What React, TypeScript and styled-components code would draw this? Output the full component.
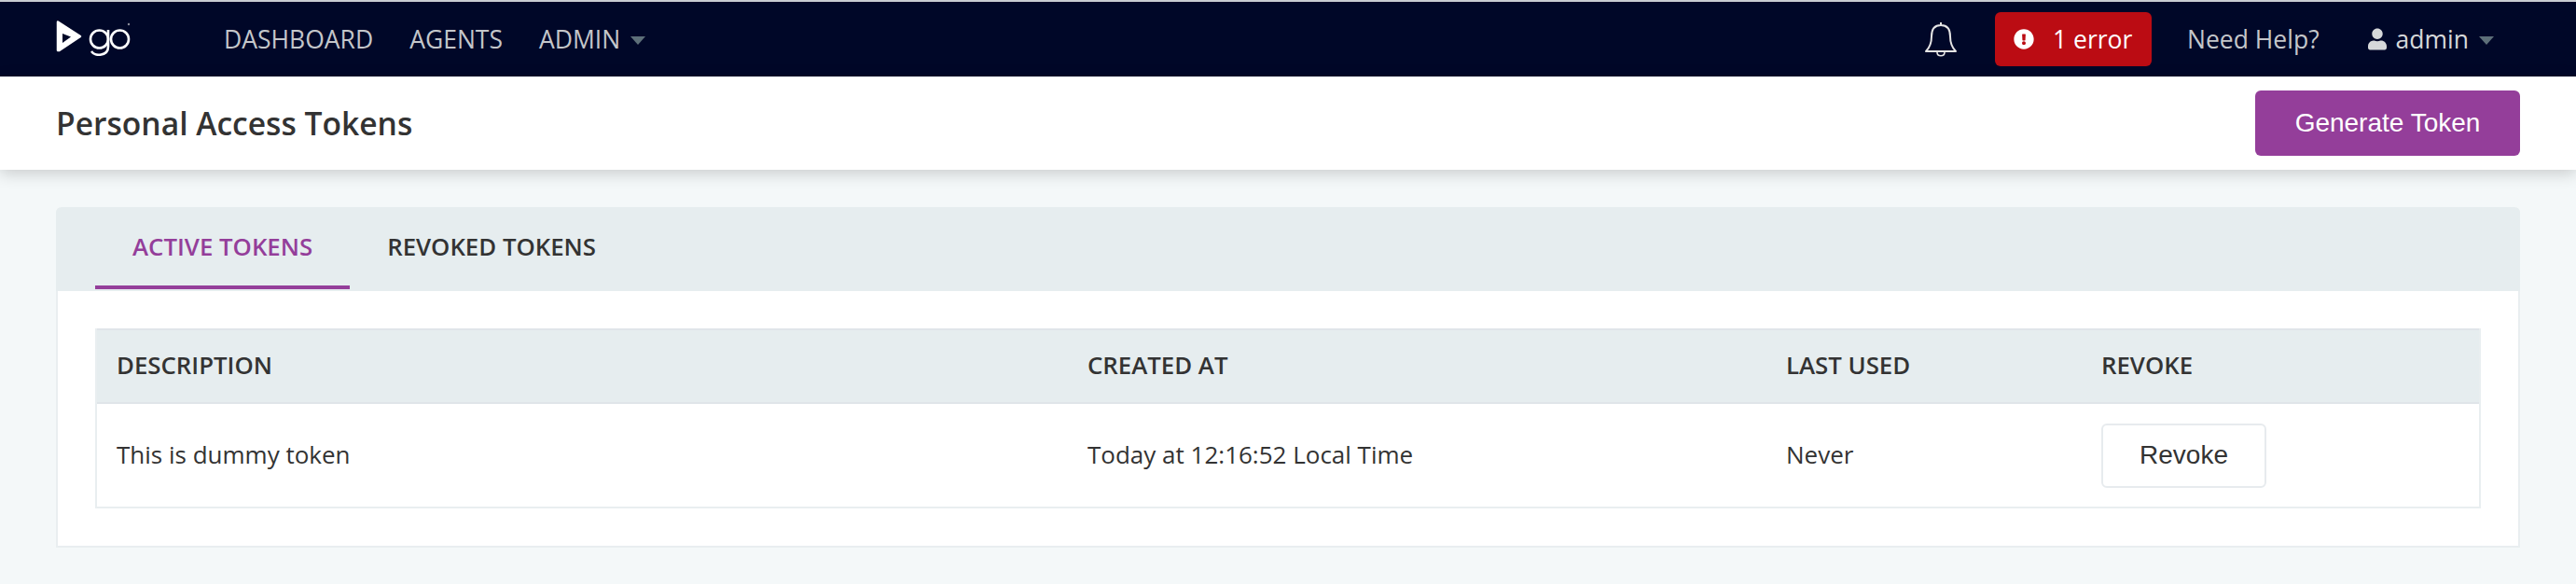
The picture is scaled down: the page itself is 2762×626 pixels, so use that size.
import styled, { createGlobalStyle } from "styled-components";
import { FaExclamationCircle, FaUser } from "react-icons/fa";

const GlobalStyle = createGlobalStyle`
    html, body {
        margin: 0;
        padding: 0;
        min-height: 100%;
        background: #f4f8f9;
    }

    body {
        font-family: "Open Sans", "Liberation Sans", sans-serif;
        color: #333;
    }

    * {
        box-sizing: border-box;
    }
`;

const Page = styled.div`
    min-height: 626px;
    background: #f4f8f9;
    overflow: hidden;
`;

const TopBar = styled.header`
    display: flex;
    align-items: center;
    height: 82px;
    padding: 0 88px 0 60px;
    background: #000728;
    border-top: 2px solid #c8ccd2;
`;

const Logo = styled.svg`
    display: block;
    width: 80px;
    height: 40px;
    flex: none;
`;

const Nav = styled.nav`
    display: flex;
    align-items: center;
    gap: 39px;
    margin-left: 100px;
`;

const NavItem = styled.a`
    display: flex;
    align-items: center;
    font-size: 26.5px;
    line-height: 34px;
    color: #c4c6ca;
`;

const Caret = styled.span`
    display: inline-block;
    width: 0;
    height: 0;
    margin-left: 11px;
    margin-top: 2px;
    border-left: 8px solid transparent;
    border-right: 8px solid transparent;
    border-top: 9px solid #5d6f79;
`;

const TopRight = styled.div`
    display: flex;
    align-items: center;
    margin-left: auto;
`;

const Bell = styled.svg`
    display: block;
    width: 36px;
    height: 38px;
    margin-right: 40px;
`;

const ErrorBadge = styled.a`
    display: flex;
    align-items: center;
    width: 168px;
    height: 58px;
    padding-left: 20px;
    border-radius: 6px;
    background: #bb0c13;
    color: #fff;
    font-size: 26.5px;

    svg {
        width: 22px;
        height: 22px;
        margin-right: 20px;
    }
`;

const HelpLink = styled.a`
    margin-left: 38px;
    font-size: 26.5px;
    color: #c4c6ca;
`;

const UserMenu = styled.a`
    display: flex;
    align-items: center;
    margin-left: 52px;
    font-size: 26.5px;
    color: #d6d8da;

    svg {
        width: 20px;
        height: 24px;
        margin-right: 10px;
    }
`;

const TitleBar = styled.div`
    position: relative;
    display: flex;
    align-items: center;
    justify-content: space-between;
    height: 100px;
    padding: 0 60px;
    background: #fff;
    box-shadow: 0 4px 16px rgba(0, 0, 0, 0.18);
`;

const Title = styled.h1`
    margin: 0;
    font-size: 33.6px;
    font-weight: 600;
    color: #333;
`;

const Button = styled.button<{ $primary?: boolean }>`
    display: block;
    font-family: "Liberation Sans", Arial, sans-serif;
    font-size: 28px;
    height: ${(props) => (props.$primary ? "70px" : "69px")};
    width: ${(props) => (props.$primary ? "284px" : "177px")};
    padding: 0;
    border-radius: 6px;
    cursor: pointer;
    border: ${(props) => (props.$primary ? "none" : "2px solid #e7ebee")};
    background: ${(props) => (props.$primary ? "#943e9a" : "#fff")};
    color: ${(props) => (props.$primary ? "#fff" : "#333")};
`;

const Content = styled.main`
    padding: 40px 60px 38px;
`;

const Panel = styled.section`
    background: #fff;
    border: 2px solid #e9eef0;
    border-top: none;
    border-radius: 6px 6px 0 0;
`;

const Tabs = styled.div`
    display: flex;
    height: 90px;
    margin: 0 -2px;
    padding-left: 42px;
    background: #e6edef;
    border-radius: 6px 6px 0 0;
`;

const Tab = styled.a<{ $active?: boolean }>`
    display: flex;
    align-items: center;
    height: 88px;
    padding: 0 40px;
    font-size: 25.8px;
    font-weight: 600;
    color: ${(props) => (props.$active ? "#943e9a" : "#333")};
    border-bottom: 4px solid ${(props) => (props.$active ? "#943e9a" : "transparent")};
`;

const TableWrap = styled.div`
    padding: 40px;
`;

const Table = styled.table`
    width: 100%;
    table-layout: fixed;
    border-collapse: separate;
    border-spacing: 0;
    border: 2px solid #e9eef0;
    border-top: none;
`;

const HeadCell = styled.th<{ $width: number }>`
    width: ${(props) => props.$width}px;
    height: 81px;
    padding: 0 0 3px 21px;
    text-align: left;
    font-size: 25.8px;
    font-weight: 600;
    color: #333;
    background: #e6edef;
    border-top: 2px solid #e0e5e9;
    border-bottom: 2px solid #e0e5e9;
`;

const Cell = styled.td`
    height: 110px;
    padding: 0 0 3px 21px;
    font-size: 26px;
    color: #333;
`;

const RevokeCell = styled(Cell)`
    padding-bottom: 0;
`;

export default function App() {
    return (
        <Page>
            <GlobalStyle />
            <TopBar>
                <Logo viewBox="0 0 80 40" aria-label="go">
                    <path d="M2 1.5 L26 17 L3.5 32 L2 32 Z" fill="#fff" stroke="#fff" strokeWidth="2.5" strokeLinejoin="round" />
                    <path d="M7 14 L16 17.5 L7 24 Z" fill="#000728" />
                    <circle cx="46.5" cy="20" r="9.5" fill="none" stroke="#fff" strokeWidth="2.6" />
                    <path d="M56 10 V28 C56 38 42 39 38 33" fill="none" stroke="#fff" strokeWidth="2.6" />
                    <circle cx="68.5" cy="20" r="9.5" fill="none" stroke="#fff" strokeWidth="2.6" />
                    <circle cx="78" cy="4" r="1.2" fill="#8a8d99" />
                </Logo>
                <Nav>
                    <NavItem>DASHBOARD</NavItem>
                    <NavItem>AGENTS</NavItem>
                    <NavItem>
                        ADMIN
                        <Caret />
                    </NavItem>
                </Nav>
                <TopRight>
                    <Bell viewBox="0 0 36 38" fill="none" stroke="#e4e4e4" strokeWidth="2" strokeLinejoin="round">
                        <path d="M18 1 V4 M18 4 C10 4 8 10 8 16 C8 24 6 28 2 32 H34 C30 28 28 24 28 16 C28 10 26 4 18 4 Z" />
                        <path d="M14 33 C14 38 22 38 22 33" strokeWidth="1.6" />
                    </Bell>
                    <ErrorBadge>
                        <FaExclamationCircle />1 error
                    </ErrorBadge>
                    <HelpLink>Need Help?</HelpLink>
                    <UserMenu>
                        <FaUser />
                        admin
                        <Caret />
                    </UserMenu>
                </TopRight>
            </TopBar>
            <TitleBar>
                <Title>Personal Access Tokens</Title>
                <Button $primary>Generate Token</Button>
            </TitleBar>
            <Content>
                <Panel>
                    <Tabs>
                        <Tab $active>ACTIVE TOKENS</Tab>
                        <Tab>REVOKED TOKENS</Tab>
                    </Tabs>
                    <TableWrap>
                        <Table>
                            <thead>
                                <tr>
                                    <HeadCell $width={1041}>DESCRIPTION</HeadCell>
                                    <HeadCell $width={749}>CREATED AT</HeadCell>
                                    <HeadCell $width={338}>LAST USED</HeadCell>
                                    <HeadCell $width={426}>REVOKE</HeadCell>
                                </tr>
                            </thead>
                            <tbody>
                                <tr>
                                    <Cell>This is dummy token</Cell>
                                    <Cell>Today at 12:16:52 Local Time</Cell>
                                    <Cell>Never</Cell>
                                    <RevokeCell>
                                        <Button>Revoke</Button>
                                    </RevokeCell>
                                </tr>
                            </tbody>
                        </Table>
                    </TableWrap>
                </Panel>
            </Content>
        </Page>
    );
}
